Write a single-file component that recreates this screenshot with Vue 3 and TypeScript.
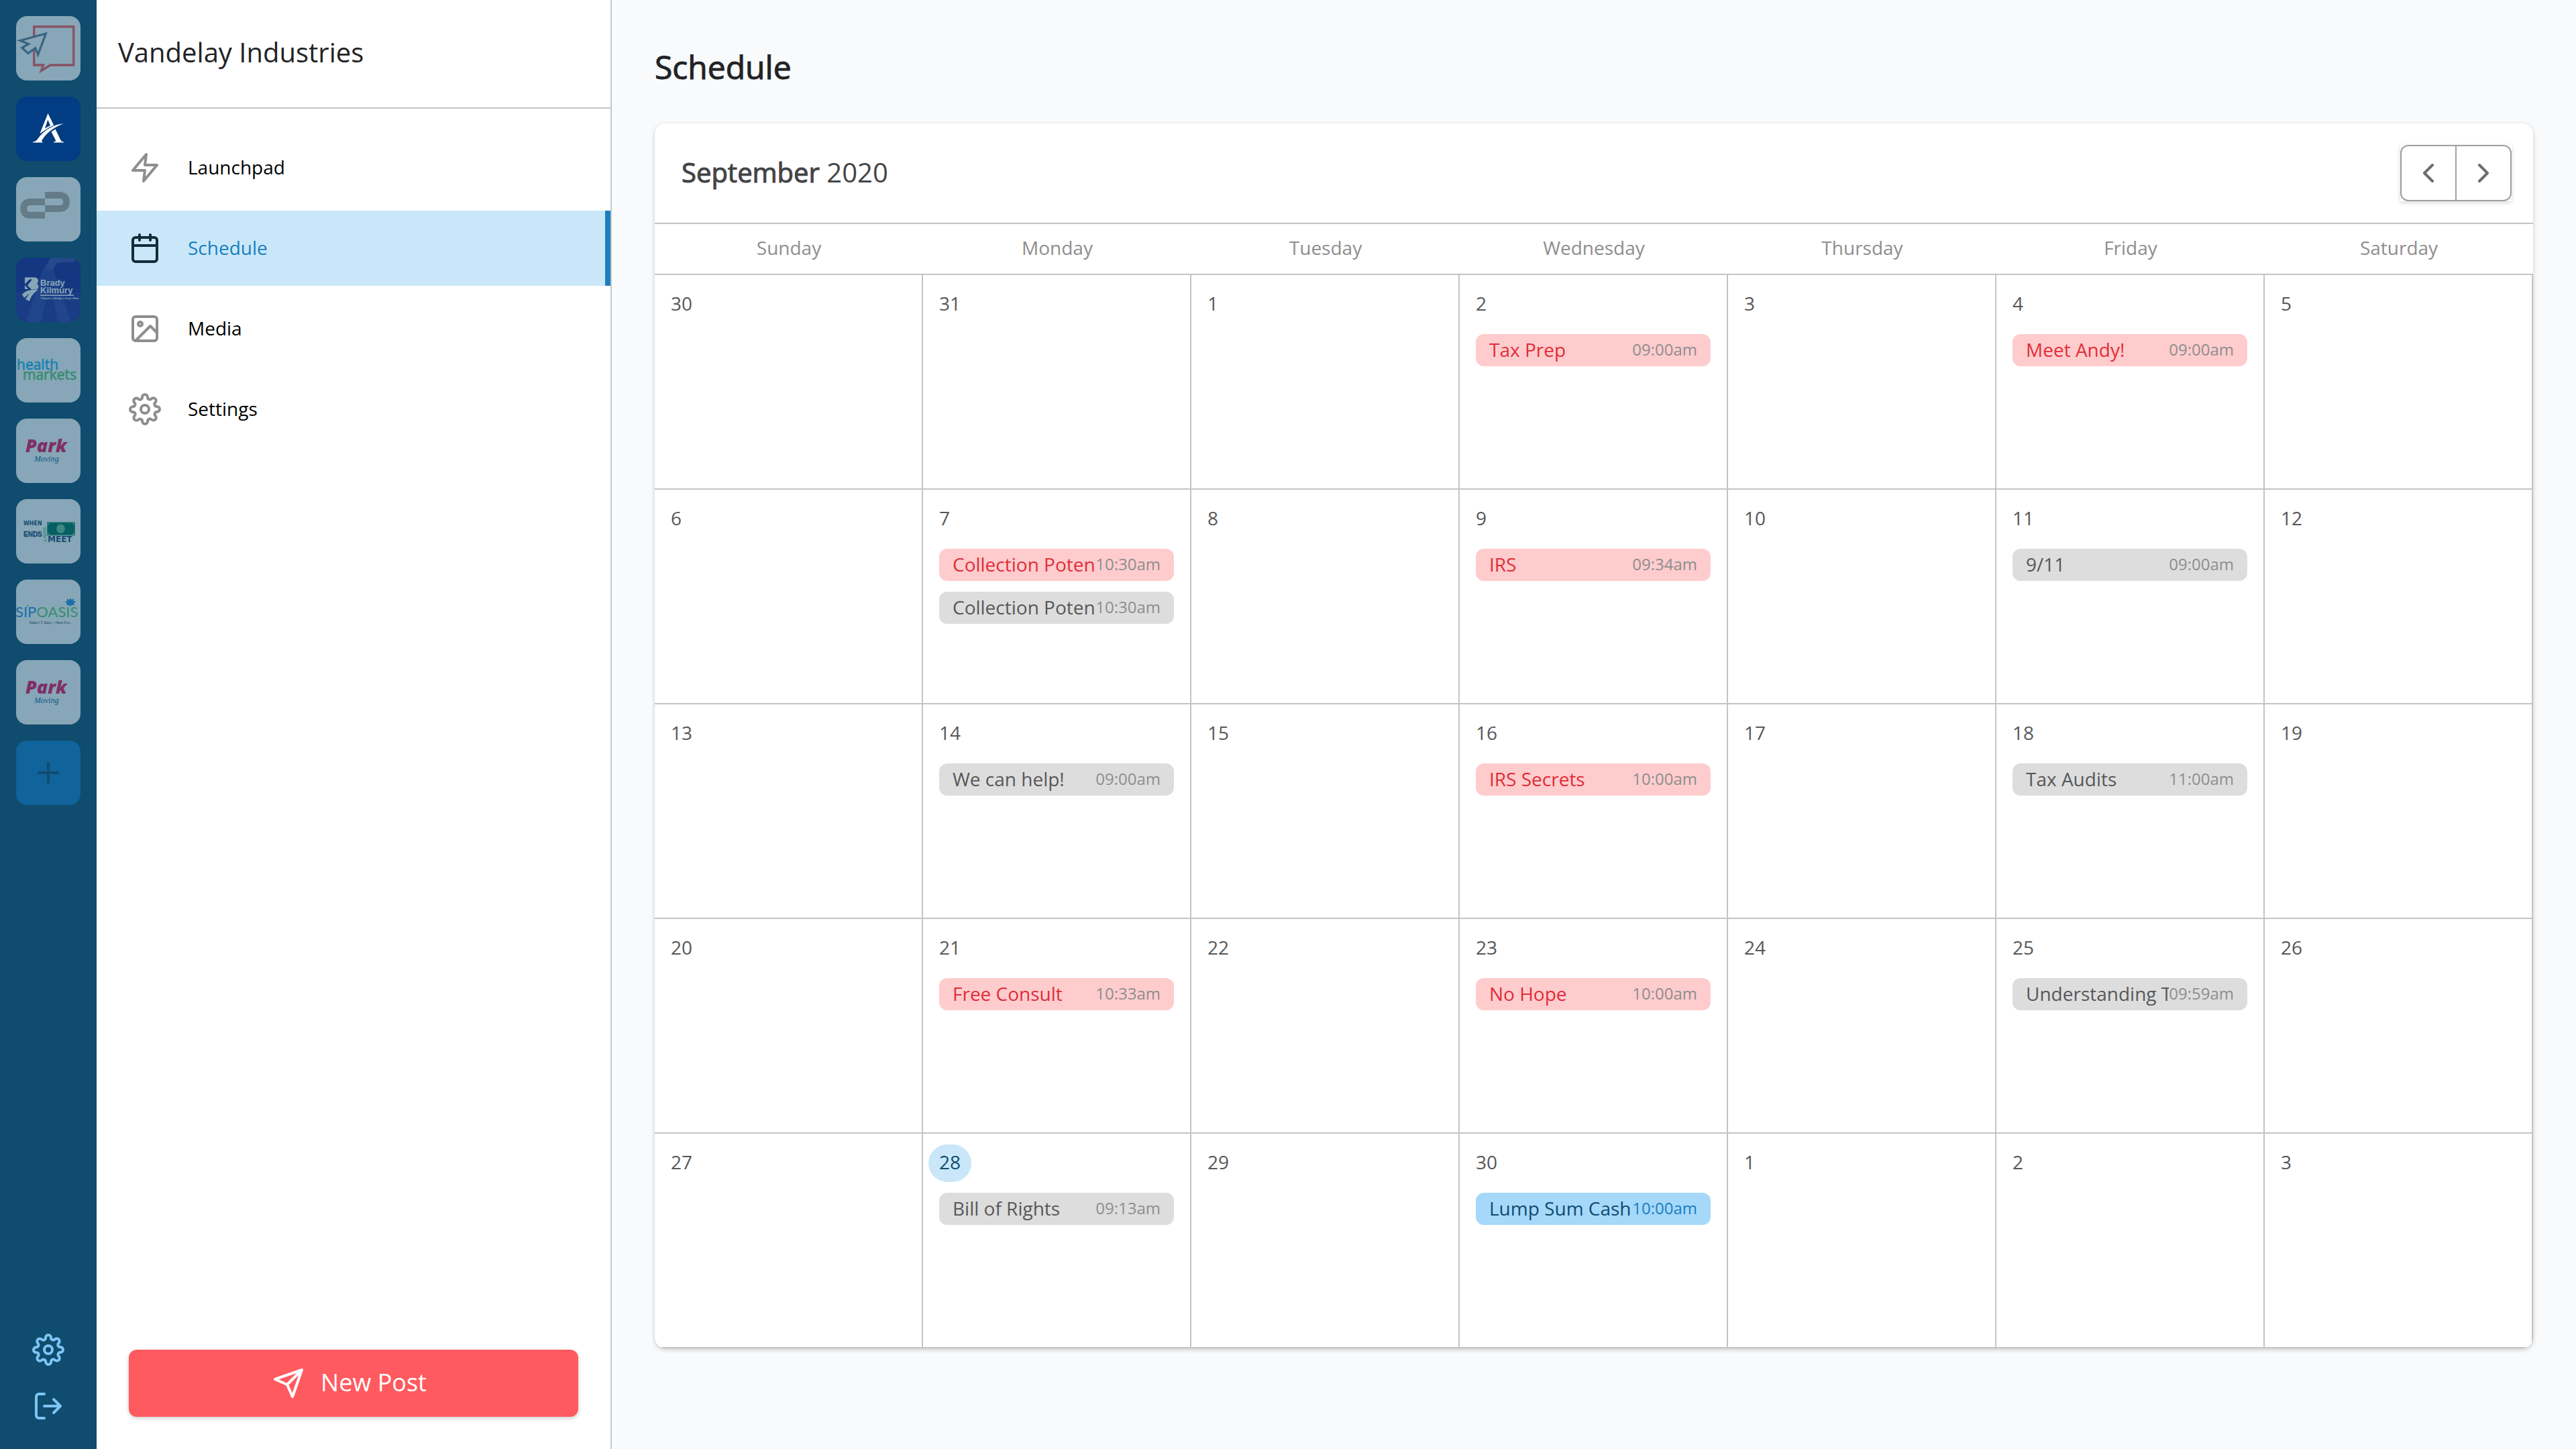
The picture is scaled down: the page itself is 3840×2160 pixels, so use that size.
<script setup lang="ts">
type Tone = 'red' | 'gray' | 'blue'

interface Post {
  title: string
  time: string
  tone: Tone
}

interface Day {
  num: number
  today?: boolean
  posts: Post[]
}

const weekdays = ['Sunday', 'Monday', 'Tuesday', 'Wednesday', 'Thursday', 'Friday', 'Saturday']

const scheduled: Record<number, Post[]> = {
  3: [{ title: 'Tax Prep', time: '09:00am', tone: 'red' }],
  5: [{ title: 'Meet Andy!', time: '09:00am', tone: 'red' }],
  8: [
    { title: 'Collection Potential', time: '10:30am', tone: 'red' },
    { title: 'Collection Potential', time: '10:30am', tone: 'gray' },
  ],
  10: [{ title: 'IRS', time: '09:34am', tone: 'red' }],
  12: [{ title: '9/11', time: '09:00am', tone: 'gray' }],
  15: [{ title: 'We can help!', time: '09:00am', tone: 'gray' }],
  17: [{ title: 'IRS Secrets', time: '10:00am', tone: 'red' }],
  19: [{ title: 'Tax Audits', time: '11:00am', tone: 'gray' }],
  22: [{ title: 'Free Consult', time: '10:33am', tone: 'red' }],
  24: [{ title: 'No Hope', time: '10:00am', tone: 'red' }],
  26: [{ title: 'Understanding Taxes', time: '09:59am', tone: 'gray' }],
  29: [{ title: 'Bill of Rights', time: '09:13am', tone: 'gray' }],
  31: [{ title: 'Lump Sum Cash', time: '10:00am', tone: 'blue' }],
}

// The grid opens on Sunday, August 30 and covers five weeks.
const gridStart = new Date(2020, 7, 30)
const todayIndex = 29

const weeks: Day[][] = Array.from({ length: 5 }, (_, w) =>
  Array.from({ length: 7 }, (_, d) => {
    const index = w * 7 + d
    const date = new Date(gridStart.getFullYear(), gridStart.getMonth(), gridStart.getDate() + index)
    return { num: date.getDate(), today: index === todayIndex, posts: scheduled[index] ?? [] }
  }),
)

const gear =
  'M19.4 15a1.65 1.65 0 0 0 .33 1.82l.06.06a2 2 0 0 1 0 2.83 2 2 0 0 1-2.83 0l-.06-.06a1.65 1.65 0 0 0-1.82-.33 1.65 1.65 0 0 0-1 1.51V21a2 2 0 0 1-2 2 2 2 0 0 1-2-2v-.09A1.65 1.65 0 0 0 9 19.4a1.65 1.65 0 0 0-1.82.33l-.06.06a2 2 0 0 1-2.83 0 2 2 0 0 1 0-2.83l.06-.06a1.65 1.65 0 0 0 .33-1.82 1.65 1.65 0 0 0-1.51-1H3a2 2 0 0 1-2-2 2 2 0 0 1 2-2h.09A1.65 1.65 0 0 0 4.6 9a1.65 1.65 0 0 0-.33-1.82l-.06-.06a2 2 0 0 1 0-2.83 2 2 0 0 1 2.83 0l.06.06a1.65 1.65 0 0 0 1.82.33H9a1.65 1.65 0 0 0 1-1.51V3a2 2 0 0 1 2-2 2 2 0 0 1 2 2v.09a1.65 1.65 0 0 0 1 1.51 1.65 1.65 0 0 0 1.82-.33l.06-.06a2 2 0 0 1 2.83 0 2 2 0 0 1 0 2.83l-.06.06a1.65 1.65 0 0 0-.33 1.82V9a1.65 1.65 0 0 0 1.51 1H21a2 2 0 0 1 2 2 2 2 0 0 1-2 2h-.09a1.65 1.65 0 0 0-1.51 1z M12 9a3 3 0 1 0 0 6 3 3 0 0 0 0-6z'

const navItems = [
  { label: 'Launchpad', icon: 'M13 2 3 14h9l-1 8 10-12h-9l1-8z' },
  {
    label: 'Schedule',
    active: true,
    icon: 'M5 4h14a2 2 0 0 1 2 2v14a2 2 0 0 1-2 2H5a2 2 0 0 1-2-2V6a2 2 0 0 1 2-2z M16 2v4 M8 2v4 M3 10h18',
  },
  {
    label: 'Media',
    icon: 'M5 3h14a2 2 0 0 1 2 2v14a2 2 0 0 1-2 2H5a2 2 0 0 1-2-2V5a2 2 0 0 1 2-2z M8.5 7a1.5 1.5 0 1 0 0 3 1.5 1.5 0 0 0 0-3z M21 15l-5-5L5 21',
  },
  { label: 'Settings', icon: gear },
]
</script>

<template>
  <div class="app">
    <aside class="rail">
      <div class="tiles">
        <button class="tile" type="button" aria-label="Workspace 1">
          <svg viewBox="0 0 96 96">
            <path d="M26.7 73V15.7h59V73H51L37.5 81.5 40.5 73z" fill="none" stroke="#ff5a5f" stroke-width="3.4" />
            <path d="M6 36.5 44.3 26 32.7 57.5 28.7 47.5 18 55.5 8.7 47.3 18.7 41.5z" fill="#fff" stroke="#5f7f95" stroke-width="3.2" />
          </svg>
        </button>
        <button class="tile tile-current" type="button" aria-label="Vandelay Industries">
          <svg viewBox="0 0 96 96" fill="#fff">
            <path fill-rule="evenodd" d="M47.5 25 56.2 42.8 50 45.6 35.3 55.3zM47.3 34.5 43 47.6 51 43z" />
            <path d="M25 68.6V67.4c4-.2 6-2.500 8-5.400C43 49 56 41.500 71 40.300 57 45.500 46 53 38.500 65c-.8 1.500-.2 2.200 1 2.400v1.200z" />
            <path d="M52.500 52.500 58.500 48.500 66 64c1.200 2.500 2.500 3.200 5 3.400v1.200H56v-1.200c2.600-.2 3.500-.8 2.700-3z" />
          </svg>
        </button>
        <button class="tile" type="button" aria-label="Workspace 3">
          <svg viewBox="0 0 96 96" fill="none" stroke="#b9ada2" stroke-width="10">
            <path d="M43 37H22q-10.700 0-10.700 10T22 56.700h21" />
            <path d="M43 27h21.500Q75 27 75 37T64.500 47H43" />
          </svg>
        </button>
        <button class="tile tile-brady" type="button" aria-label="Brady Kilmury">
          <svg viewBox="0 0 96 96">
            <path d="M40 17h15l27 79H62L51 40 37 96H15z" fill="#3a49ad" opacity=".6" />
            <path d="M51 0h38l-2 6-26 2-6 9H42z" fill="#5a6cc0" opacity=".5" />
            <path d="M0 52h96v44H0z" fill="#4150b0" opacity=".22" />
            <path d="M13 29.500h14c6 0 8 6 4 9.500 4 3 3 8-2 8.500h-6l-6-6 7-9h-4l-7 7z" fill="#fff" />
            <path d="M13 41 18 47h-5z" fill="#fff" />
            <path d="M9 55c5-6 13-8 24-7-6 4-11 9-13 17l-6-3 6-9-8 7z" fill="#fff" />
            <g fill="#fff" class="sans-bold">
              <text x="36" y="42" font-size="13">Brady</text>
              <text x="36" y="53" font-size="13">Kilmury</text>
              <text x="37" y="62" font-size="4" font-style="italic">Chrysler | Dodge | Jeep | Ram</text>
            </g>
            <path d="M36 56.300h50" stroke="#fff" stroke-width="1.500" />
          </svg>
        </button>
        <button class="tile" type="button" aria-label="Health Markets">
          <svg viewBox="0 0 96 96" class="open-sans" stroke-width=".7">
            <text x="1" y="47" font-size="21" fill="#1fb8f5" stroke="#1fb8f5">health</text>
            <text x="10" y="62" font-size="21" fill="#64cc72" stroke="#64cc72">markets</text>
          </svg>
        </button>
        <button class="tile" type="button" aria-label="Park Moving">
          <svg viewBox="0 0 96 96">
            <text x="14" y="50" font-size="27" font-weight="800" font-style="italic" fill="#ee1460" class="open-sans">Park</text>
            <text x="27" y="64" font-size="12" font-style="italic" fill="#10649a" class="serif">Moving</text>
          </svg>
        </button>
        <button class="tile" type="button" aria-label="When Ends Don't Meet">
          <svg viewBox="0 0 96 96">
            <g fill="#1d4976" class="dejavu-bold">
              <text x="11" y="39" font-size="8">WHEN</text>
              <text x="47" y="64" font-size="12">MEET</text>
            </g>
            <text x="11" y="56" font-size="10" fill="#1d4976" stroke="#1d4976" stroke-width=".3" class="narrow-bold">ENDS</text>
            <text transform="translate(40 42) rotate(90)" font-size="7" fill="#5fc48c" class="narrow-bold">DON'T</text>
            <path d="M46 34h42v20.500H46z" fill="#4fae86" />
            <path d="M50 35.500h34q0 3 3 3V50q-3 0-3 3H50q0-3-3-3V38.500q3 0 3-3z" fill="#00735a" />
            <ellipse cx="66.500" cy="44.300" rx="6.300" ry="6.700" fill="#68c498" />
          </svg>
        </button>
        <button class="tile" type="button" aria-label="SipOasis">
          <svg viewBox="0 0 96 96">
            <text x="-1" y="56" font-size="22" class="lato"><tspan fill="#2590ea">SIP</tspan><tspan fill="#60cf70">OASIS</tspan></text>
            <path d="M16 42q0-4 3-5-1 3-3 5z" fill="#60cf70" />
            <path d="m81 28 1.500 3 3-2-.5 3.300 3.500.7-3 2 1 3-3.500-1-2 2.500-2-2.500-3.500 1 1-3-3-2 3.500-.7-.5-3.300 3 2z" fill="#2590ea" stroke="#2590ea" />
            <text x="20" y="66" font-size="5" fill="#26455c" class="narrow">Make I.T. Easy ~ Have Fun.</text>
          </svg>
        </button>
        <button class="tile" type="button" aria-label="Park Moving, second workspace">
          <svg viewBox="0 0 96 96">
            <text x="14" y="50" font-size="27" font-weight="800" font-style="italic" fill="#ee1460" class="open-sans">Park</text>
            <text x="27" y="64" font-size="12" font-style="italic" fill="#10649a" class="serif">Moving</text>
          </svg>
        </button>
        <button class="tile tile-add" type="button" aria-label="Add workspace">
          <svg class="icon" viewBox="0 0 24 24"><path d="M12 5v14M5 12h14" /></svg>
        </button>
      </div>
      <div class="rail-actions">
        <button type="button" aria-label="Account settings">
          <svg class="icon" viewBox="0 0 24 24"><path :d="gear" /></svg>
        </button>
        <button type="button" aria-label="Log out">
          <svg class="icon" viewBox="0 0 24 24">
            <path d="M9 21H5a2 2 0 0 1-2-2V5a2 2 0 0 1 2-2h4M16 17l5-5-5-5M21 12H9" />
          </svg>
        </button>
      </div>
    </aside>

    <div class="panel">
      <header class="panel-head">Vandelay Industries</header>
      <nav class="nav">
        <a
          v-for="item in navItems"
          :key="item.label"
          href="#"
          class="nav-item"
          :class="{ active: item.active }"
        >
          <svg class="icon" viewBox="0 0 24 24"><path :d="item.icon" /></svg>
          <span>{{ item.label }}</span>
        </a>
      </nav>
      <div class="panel-foot">
        <button class="new-post" type="button">
          <svg class="icon" viewBox="0 0 24 24"><path d="M22 2 11 13M22 2l-7 20-4-9-9-4 20-7z" /></svg>
          <span>New Post</span>
        </button>
      </div>
    </div>

    <main class="main">
      <h1>Schedule</h1>
      <section class="card">
        <header class="card-head">
          <h2><strong>September</strong> 2020</h2>
          <div class="pager">
            <div class="pager-inner">
              <button type="button" aria-label="Previous month">
                <svg class="icon" viewBox="0 0 24 24"><path d="m15 18-6-6 6-6" /></svg>
              </button>
              <button type="button" aria-label="Next month">
                <svg class="icon" viewBox="0 0 24 24"><path d="m9 18 6-6-6-6" /></svg>
              </button>
            </div>
          </div>
        </header>
        <table class="calendar">
          <thead>
            <tr>
              <th v-for="name in weekdays" :key="name" scope="col">{{ name }}</th>
            </tr>
          </thead>
          <tbody>
            <tr v-for="(week, w) in weeks" :key="w">
              <td v-for="(day, d) in week" :key="d">
                <span class="num" :class="{ today: day.today }">{{ day.num }}</span>
                <ul v-if="day.posts.length" class="posts">
                  <li v-for="(post, p) in day.posts" :key="p" class="post" :class="post.tone">
                    <span class="post-title">{{ post.title }}</span>
                    <span class="post-time">{{ post.time }}</span>
                  </li>
                </ul>
              </td>
            </tr>
          </tbody>
        </table>
      </section>
    </main>
  </div>
</template>

<style>
body {
  background: #f8fafc;
}
</style>

<style scoped>
.app {
  display: flex;
  min-height: 100vh;
  font-family: 'Open Sans', 'Noto Sans', sans-serif;
  font-size: 28px;
  line-height: 40px;
  color: #222325;
}

.app *,
.app *::before {
  box-sizing: border-box;
}

button {
  margin: 0;
  padding: 0;
  border: 0;
  background: none;
  font: inherit;
  color: inherit;
  cursor: pointer;
}

svg {
  display: block;
}

.icon {
  width: 48px;
  height: 48px;
  flex: none;
  fill: none;
  stroke: currentColor;
  stroke-width: 2;
  stroke-linecap: round;
  stroke-linejoin: round;
}

/* workspace rail */
.rail {
  flex: none;
  width: 144px;
  display: flex;
  flex-direction: column;
  justify-content: space-between;
  align-items: center;
  padding: 24px 0 40px;
  background: #0f4c6e;
}

.tiles {
  display: flex;
  flex-direction: column;
  gap: 24px;
}

.tile {
  width: 96px;
  height: 96px;
  border-radius: 16px;
  overflow: hidden;
  background: #fff;
  opacity: 0.5;
}

.tile-current {
  background: #023c82;
  opacity: 1;
}

.tile-brady {
  background: #1c2394;
}

.tile-add {
  display: flex;
  align-items: center;
  justify-content: center;
  background: #10639b;
  color: #0f4c6e;
  opacity: 1;
}

.rail-actions {
  display: flex;
  flex-direction: column;
  gap: 36px;
  color: #7cc5f4;
}

.sans-bold {
  font-family: 'Liberation Sans', sans-serif;
  font-weight: 700;
}

.open-sans {
  font-family: 'Open Sans', sans-serif;
}

.serif {
  font-family: 'Liberation Serif', serif;
}

.dejavu-bold {
  font-family: 'DejaVu Sans', sans-serif;
  font-weight: 700;
}

.narrow,
.narrow-bold {
  font-family: 'Liberation Sans Narrow', 'Liberation Sans', sans-serif;
}

.narrow-bold {
  font-weight: 700;
}

.lato {
  font-family: Lato, sans-serif;
}

/* navigation panel */
.panel {
  flex: none;
  width: 768px;
  display: flex;
  flex-direction: column;
  background: #fff;
  border-right: 2px solid #c6c8ca;
}

.panel-head {
  padding: 50px 32px 54px;
  border-bottom: 2px solid #c4c4c4;
  font-size: 40px;
  line-height: 56px;
}

.nav {
  display: flex;
  flex-direction: column;
  gap: 8px;
  padding-top: 32px;
}

.nav-item {
  display: flex;
  align-items: center;
  gap: 40px;
  height: 112px;
  padding-left: 48px;
  color: #000;
  text-decoration: none;
}

.nav-item span {
  padding-bottom: 2px;
}

.nav-item .icon {
  color: #8e8e8e;
}

.nav-item.active {
  background: #c9e7f9;
  border-right: 8px solid #1a7fbd;
  color: #1a7fbd;
}

.nav-item.active .icon {
  color: #142b38;
}

.panel-foot {
  margin-top: auto;
  padding: 48px;
}

.new-post {
  display: flex;
  align-items: center;
  justify-content: center;
  gap: 24px;
  width: 100%;
  height: 100px;
  padding-right: 12px;
  border-radius: 12px;
  background: #ff5a5f;
  box-shadow: 0 2px 6px rgba(0, 0, 0, 0.2);
  color: #fff;
  font-size: 36px;
}

.new-post span {
  padding-bottom: 2px;
}

/* schedule */
.main {
  flex: 1;
  min-width: 0;
  padding: 72px 64px 64px;
}

h1 {
  margin: 0 0 56px;
  font-size: 48px;
  line-height: 56px;
  font-weight: 400;
  -webkit-text-stroke: 1px currentColor;
}

.card {
  overflow: hidden;
  border-radius: 16px;
  background: #fff;
  box-shadow: 0 2px 6px rgba(0, 0, 0, 0.2);
}

.card-head {
  display: flex;
  align-items: center;
  justify-content: space-between;
  height: 150px;
  padding: 0 32px 0 40px;
  border-bottom: 2px solid #c4c4c4;
}

h2 {
  margin: 0;
  padding-bottom: 2px;
  font-size: 40px;
  line-height: 56px;
  font-weight: 400;
  color: #434446;
}

h2 strong {
  font-weight: 400;
  -webkit-text-stroke: 1px currentColor;
}

.pager {
  background: #fff;
  box-shadow: 0 2px 6px rgba(0, 0, 0, 0.16);
}

.pager-inner {
  display: flex;
  border: 2px solid #a0a0a0;
  border-radius: 12px;
  color: #6c6c6c;
}

.pager-inner button {
  padding: 16px;
}

.pager-inner button + button {
  border-left: 2px solid #a0a0a0;
}

.calendar {
  width: 100%;
  table-layout: fixed;
  border-collapse: separate;
  border-spacing: 0;
}

th {
  height: 76px;
  padding: 0 0 4px;
  border-bottom: 2px solid #c4c4c4;
  color: #8e8e8e;
  font-weight: 400;
  text-align: center;
}

td {
  height: 320px;
  padding: 16px 24px 16px 8px;
  border-right: 2px solid #c4c4c4;
  border-bottom: 2px solid #c4c4c4;
  vertical-align: top;
}

.num {
  display: block;
  width: fit-content;
  padding: 6px 16px 10px;
  border-radius: 28px;
  color: #575859;
}

.num.today {
  background: #c9e7f9;
  color: #0f4c6e;
}

.posts {
  display: flex;
  flex-direction: column;
  gap: 16px;
  margin: 16px 0 0;
  padding: 0 0 0 16px;
  list-style: none;
}

.post {
  display: flex;
  align-items: center;
  height: 48px;
  padding: 0 20px 2px;
  border-radius: 12px;
}

.post-title {
  flex: 1;
  min-width: 0;
  overflow: hidden;
  white-space: nowrap;
}

.post-time {
  font-size: 24px;
  color: #8e8e8e;
}

.post.red {
  background: #fecccd;
  color: #e12d39;
}

.post.gray {
  background: #dddddd;
  color: #575859;
}

.post.blue {
  background: #a6d8fa;
  color: #0f4c6e;
}

.post.red .post-time,
.post.gray .post-time {
  color: #8e8e8e;
}

.post.blue .post-time {
  color: #1a7fbd;
}
</style>
